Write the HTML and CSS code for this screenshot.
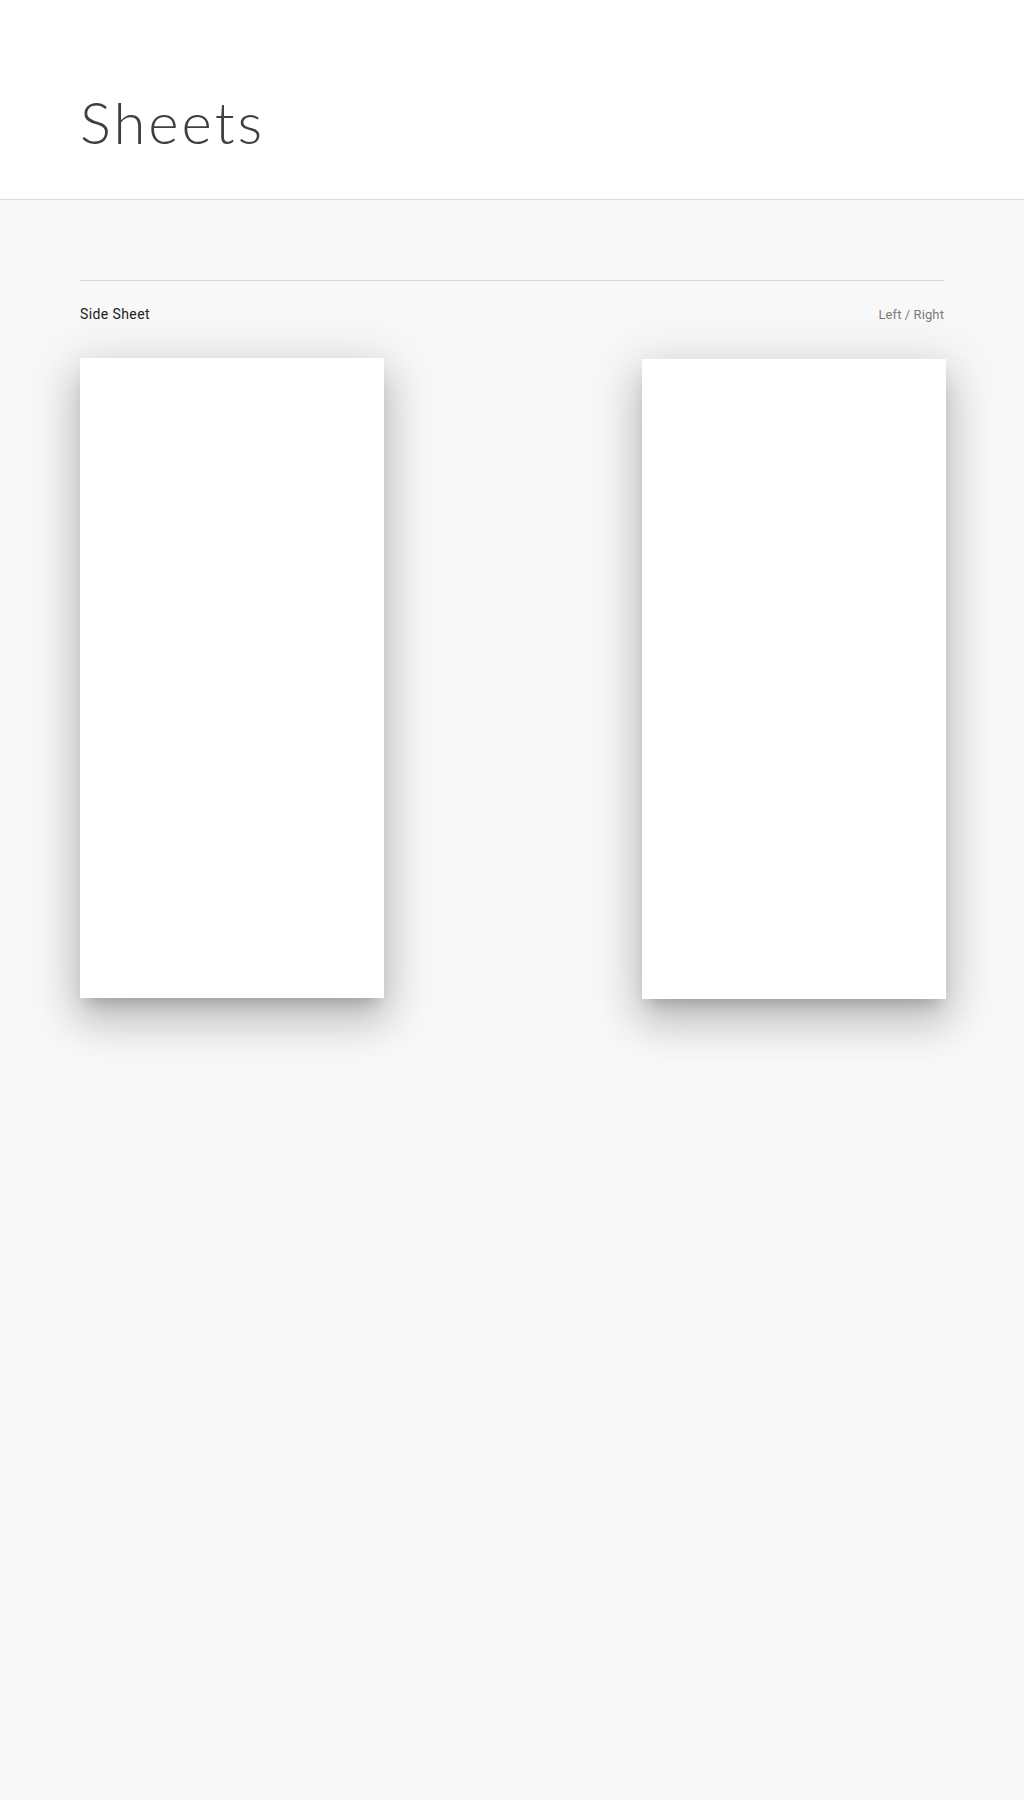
FILE: index.html
```html
<!DOCTYPE html>
<html lang="en">
<head>
  <meta charset="UTF-8" />
  <meta name="viewport" content="width=device-width, initial-scale=1.0" />
  <title>Sheets</title>
  <link rel="stylesheet" href="styles.css">
</head>
<body>
  <header class="page-header">
    <h1>Sheets</h1>
  </header>

  <main class="content">
    <section class="demo">
      <div class="demo-head">
        <span class="demo-title">Side Sheet</span>
        <span class="demo-variant">Left / Right</span>
      </div>

      <div class="sheet-row">
        <div class="sheet sheet-left"></div>
        <div class="sheet sheet-right"></div>
      </div>
    </section>
  </main>
</body>
</html>
```

FILE: styles.css
```css
body {
  margin: 0;
  font-family: Roboto, "Noto Sans", sans-serif;
  background: #f8f8f8;
  color: #212121;
  min-height: 1800px;
}

.page-header {
  background: #fff;
  border-bottom: 1px solid #dcdcdc;
  height: 200px;
  padding: 0 80px;
  box-sizing: border-box;
}

.page-header h1 {
  margin: 0;
  padding-top: 88px;
  font-family: Lato, sans-serif;
  font-weight: 300;
  font-size: 58px;
  line-height: 68px;
  color: #3f3f3f;
  letter-spacing: 3px;
}

.content {
  padding: 80px 80px 0;
}

.demo {
  border-top: 1px solid #d6d6d6;
}

.demo-head {
  display: flex;
  justify-content: space-between;
  align-items: baseline;
  padding-top: 23px;
  font-size: 14px;
  line-height: 20px;
}

.demo-title {
  color: #212121;
  letter-spacing: 0.4px;
}

.demo-variant {
  color: #7a7a7a;
  font-size: 13px;
  letter-spacing: 0.1px;
}

.sheet-row {
  display: flex;
  justify-content: space-between;
  margin-top: 33px;
  margin-right: -2px;
}

.sheet {
  width: 304px;
  height: 640px;
  background: #fff;
  box-shadow: 0 11px 15px -7px rgba(0, 0, 0, 0.2),
              0 24px 38px 3px rgba(0, 0, 0, 0.14),
              0 9px 46px 8px rgba(0, 0, 0, 0.12);
}

.sheet-right {
  margin-top: 1px;
}
```
